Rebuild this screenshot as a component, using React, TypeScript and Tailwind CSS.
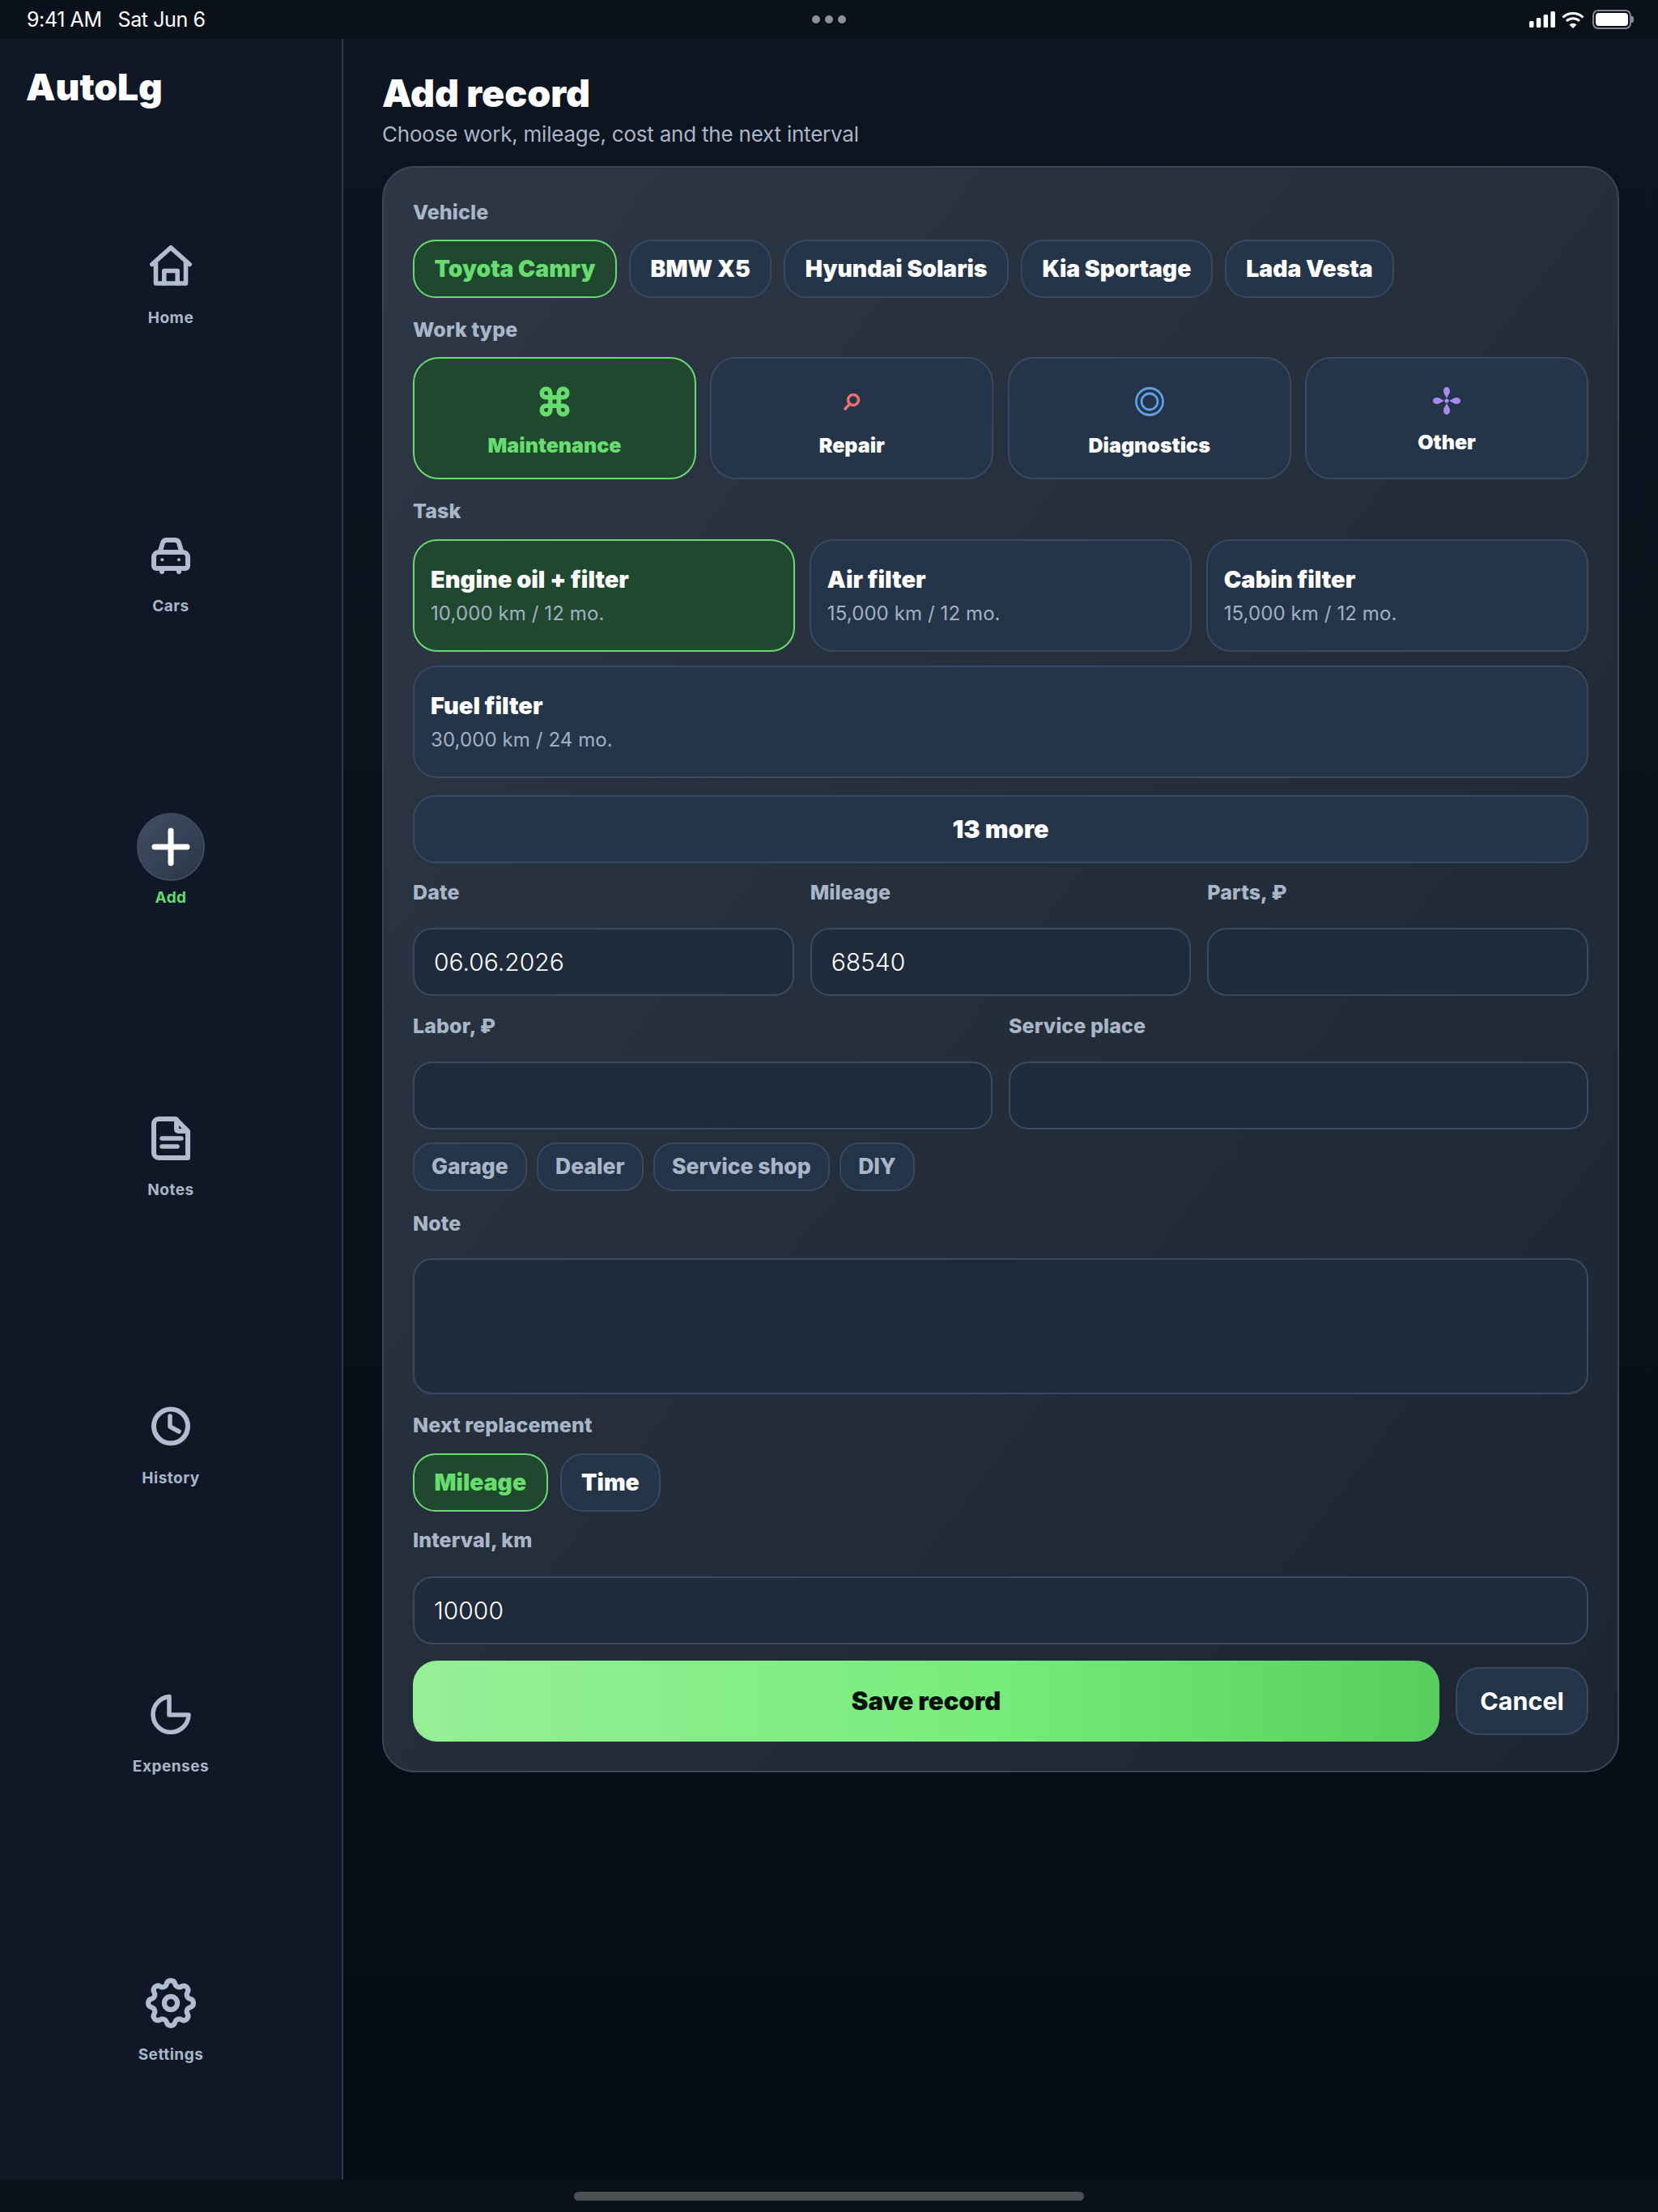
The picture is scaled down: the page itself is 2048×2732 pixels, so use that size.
import React from "react";

const Label = ({ children, className = "" }: { children: React.ReactNode; className?: string }) => (
  <div className={`h-[34px] text-[25px] leading-[32px] font-extrabold tracking-[0.1px] text-[#a9b6c8] ${className}`}>{children}</div>
);

const Chip = ({ children, active = false }: { children: React.ReactNode; active?: boolean }) => (
  <div
    className={`h-[72px] px-[24.500px] flex items-center rounded-[28px] border-2 text-[28.300px] font-black ${
      active ? "bg-[#20482f] border-[#6bd873] text-[#66dd6e]" : "bg-[#253549] border-[#3a4862] text-white"
    }`}
  >
    {children}
  </div>
);

const SmallChip = ({ children }: { children: React.ReactNode }) => (
  <div className="h-[60px] px-[21px] flex items-center rounded-[24px] border-2 bg-[#253549] border-[#3a4862] text-[#a9b6c8] text-[26.500px] font-extrabold">
    {children}
  </div>
);

const Field = ({ children, className = "" }: { children?: React.ReactNode; className?: string }) => (
  <div className={`h-[84px] px-[24px] flex items-center rounded-[24px] border-2 bg-[#1f2b3b] border-[#3b4a63] text-white text-[30px] font-[350] ${className}`}>
    {children}
  </div>
);

const TaskCard = ({ title, sub, active = false, className = "" }: { title: string; sub: string; active?: boolean; className?: string }) => (
  <div
    className={`h-[139px] pl-[20px] flex flex-col justify-center rounded-[30px] border-2 ${
      active ? "bg-[#20482f] border-[#6bd873]" : "bg-[#253549] border-[#3a4862]"
    } ${className}`}
  >
    <div className="text-[29px] leading-[40px] font-black text-white">{title}</div>
    <div className="mt-[4px] text-[24px] leading-[36px] tracking-[0.1px] text-[#a3b0c2]">{sub}</div>
  </div>
);

const WorkCard = ({ label, icon, active = false, boxClass, labelClass }: { label: string; icon: React.ReactNode; active?: boolean; boxClass: string; labelClass: string }) => (
  <div
    className={`h-[151px] flex flex-col items-center justify-center rounded-[32px] border-2 ${
      active ? "bg-[#20482f] border-[#6bd873]" : "bg-[#253549] border-[#3a4862]"
    }`}
  >
    <div className={`flex items-center justify-center ${boxClass}`}>{icon}</div>
    <div className={`text-[25px] leading-[32px] font-black ${active ? "text-[#66dd6e]" : "text-white"} ${labelClass}`}>{label}</div>
  </div>
);

const iconStroke = {
  fill: "none",
  stroke: "#b1bdcd",
  strokeLinecap: "round" as const,
  strokeLinejoin: "round" as const,
};

const HomeIcon = () => (
  <svg width="52" height="50" viewBox="0 0 52 50" {...iconStroke} strokeWidth="5.6">
    <path d="M2.8 23.5 26 2.8l23.2 20.700" />
    <path d="M7.500 20v27h37V20" />
    <path d="M17.800 47V31.500h16.400V47" />
  </svg>
);

const CarIcon = () => (
  <svg width="48" height="46" viewBox="0 0 48 46" {...iconStroke} strokeWidth="6">
    <path d="M9 19h30a6 6 0 0 1 6 6v11a3 3 0 0 1-3 3H6a3 3 0 0 1-3-3V25a6 6 0 0 1 6-6Z" />
    <path d="M10.500 19 14 7.500A5 5 0 0 1 18.500 4h11A5 5 0 0 1 34 7.500L37.500 19" />
    <path d="M13 40v3M34 40v3" />
    <circle cx="13.300" cy="28.300" r="2" fill="#b1bdcd" stroke="none" />
    <circle cx="34" cy="28.300" r="2" fill="#b1bdcd" stroke="none" />
  </svg>
);

const PlusIcon = () => (
  <svg width="48" height="48" viewBox="0 0 48 48" fill="none" stroke="#ffffff" strokeWidth="7" strokeLinecap="round">
    <path d="M24 4v40M4 24h40" />
  </svg>
);

const NoteIcon = () => (
  <svg width="48" height="54" viewBox="0 0 48 54" {...iconStroke} strokeWidth="6">
    <path d="M9 3h21l15 15v33H9a6 6 0 0 1-6-6V9a6 6 0 0 1 6-6Z" />
    <path d="M31 4v12a2 2 0 0 0 2 2h11" />
    <path d="M13 27h24M13 37h19" strokeWidth="5.500" />
  </svg>
);

const ClockIcon = () => (
  <svg width="48" height="49" viewBox="0 0 48 49" {...iconStroke} strokeWidth="6">
    <circle cx="24" cy="24.500" r="21" />
    <path d="M23 12v13l11 6" strokeWidth="5.500" />
  </svg>
);

const PieIcon = () => (
  <svg width="50" height="50" viewBox="0 0 50 50" {...iconStroke} strokeWidth="5.500">
    <path d="M23 3.500A22 22 0 1 0 47 26H23Z" />
  </svg>
);

const GearIcon = () => (
  <svg width="62" height="62" viewBox="2 2 20 20" {...iconStroke} strokeWidth="2">
    <path d="M10.325 4.317c.426-1.756 2.924-1.756 3.35 0a1.724 1.724 0 002.573 1.066c1.543-.94 3.31.826 2.37 2.37a1.724 1.724 0 001.065 2.572c1.756.426 1.756 2.924 0 3.35a1.724 1.724 0 00-1.066 2.573c.94 1.543-.826 3.31-2.37 2.37a1.724 1.724 0 00-2.572 1.065c-.426 1.756-2.924 1.756-3.35 0a1.724 1.724 0 00-2.573-1.066c-1.543.94-3.31-.826-2.37-2.37a1.724 1.724 0 00-1.065-2.572c-1.756-.426-1.756-2.924 0-3.35a1.724 1.724 0 001.066-2.573c-.94-1.543.826-3.31 2.37-2.37.996.608 2.296.07 2.572-1.065z" />
    <circle cx="12" cy="12" r="2.600" />
  </svg>
);

const NavItem = ({ icon, label, topClass, gapClass, active = false }: { icon: React.ReactNode; label: string; topClass: string; gapClass: string; active?: boolean }) => (
  <div className={`flex flex-col items-center ${topClass}`}>
    <div className={`flex justify-center ${gapClass}`}>{icon}</div>
    <div className={`h-[24px] text-[19px] leading-[26px] font-bold tracking-[0.5px] ${active ? "text-[#62d96b]" : "text-[#a9b6c8]"}`}>{label}</div>
  </div>
);

const Sidebar = () => (
  <aside className="w-[424px] shrink-0 bg-[#101827] border-r-2 border-[#2e3a50] flex flex-col">
    <div className="pt-[31px] pl-[32px] text-[46px] leading-[56px] font-black text-white">AutoLg</div>
    <NavItem icon={<HomeIcon />} label="Home" topClass="mt-[168px]" gapClass="mb-[27px]" />
    <NavItem icon={<CarIcon />} label="Cars" topClass="mt-[259px]" gapClass="mb-[27px]" />
    <NavItem
      icon={
        <div className="w-[84px] h-[84px] rounded-full border-2 border-[#3f4c60] bg-gradient-to-br from-[#414f64] to-[#2a3547] flex items-center justify-center">
          <PlusIcon />
        </div>
      }
      label="Add"
      topClass="mt-[244px]"
      gapClass="mb-[8px]"
      active
    />
    <NavItem icon={<NoteIcon />} label="Notes" topClass="mt-[259px]" gapClass="mb-[24px]" />
    <NavItem icon={<ClockIcon />} label="History" topClass="mt-[256px]" gapClass="mb-[27px]" />
    <NavItem icon={<PieIcon />} label="Expenses" topClass="mt-[255px]" gapClass="mb-[27px]" />
    <NavItem icon={<GearIcon />} label="Settings" topClass="mt-[250px]" gapClass="mb-[20px]" />
  </aside>
);

const StatusBar = () => (
  <div className="h-[48px] shrink-0 bg-[#0a111b] relative flex items-center justify-between pl-[33px] pr-[30px]">
    <div className="text-white text-[25px] leading-[48px] whitespace-pre tracking-[-0.4px]">9:41 AM{"   "}Sat Jun 6</div>
    <div className="absolute left-[1003px] top-[19px] flex gap-[6px]">
      <div className="w-[10px] h-[10px] rounded-full bg-[#8d9199]" />
      <div className="w-[10px] h-[10px] rounded-full bg-[#8d9199]" />
      <div className="w-[10px] h-[10px] rounded-full bg-[#8d9199]" />
    </div>
    <div className="flex items-center gap-[8px]">
      <svg width="32" height="20" viewBox="0 0 32 20" fill="#ffffff">
        <rect x="0" y="12" width="5.500" height="8" rx="1.500" />
        <rect x="8.800" y="8" width="5.500" height="12" rx="1.500" />
        <rect x="17.600" y="4" width="5.500" height="16" rx="1.500" />
        <rect x="26.400" y="0" width="5.500" height="20" rx="1.500" />
      </svg>
      <svg width="28" height="21" viewBox="0 0 28 21" fill="none" stroke="#ffffff" strokeWidth="3">
        <path d="M1.500 7.500a18 18 0 0 1 25 0" />
        <path d="M6 12a11.500 11.500 0 0 1 16 0" />
        <path d="M14 21l-4.500-4.500a6.400 6.400 0 0 1 9 0Z" fill="#ffffff" stroke="none" />
      </svg>
      <div className="flex items-center ml-[2px]">
        <div className="w-[48px] h-[24px] rounded-[7px] border-2 border-[#84888f] p-[2px]">
          <div className="w-full h-full rounded-[4px] bg-white" />
        </div>
        <div className="w-[3px] h-[8px] rounded-r-[2px] bg-[#84888f]" />
      </div>
    </div>
  </div>
);

const OtherIcon = () => (
  <svg width="34" height="34" viewBox="0 0 34 34" fill="#a78bf0">
    <path d="M17 0c2.600 0 4 2.600 4 5.200 0 2.800-2.500 5-4 8.800-1.500-3.800-4-6-4-8.800C13 2.600 14.400 0 17 0Z" />
    <path d="M17 34c2.600 0 4-2.600 4-5.200 0-2.800-2.500-5-4-8.800-1.500 3.800-4 6-4 8.800 0 2.600 1.400 5.200 4 5.200Z" />
    <path d="M0 17c0-2.600 2.600-4 5.200-4 2.800 0 5 2.500 8.800 4-3.800 1.500-6 4-8.800 4C2.600 21 0 19.600 0 17Z" />
    <path d="M34 17c0-2.600-2.600-4-5.200-4-2.800 0-5 2.500-8.800 4 3.800 1.500 6 4 8.800 4 2.600 0 5.200-1.400 5.200-4Z" />
    <circle cx="17" cy="17" r="2.600" />
  </svg>
);

export default function App() {
  return (
    <div className="w-[2048px] h-[2732px] flex flex-col [font-family:Inter,sans-serif] bg-[#060c15] overflow-hidden">
      <StatusBar />
      <div className="flex-1 flex min-h-0">
        <Sidebar />
        <main className="flex-1 px-[48px] pt-[39px] bg-gradient-to-b from-[#0d1520] to-[#060c15]">
          <h1 className="text-[46.500px] leading-[56px] font-black text-white">Add record</h1>
          <p className="mt-[5px] text-[26px] leading-[36px] tracking-[-0.22px] text-[#a9b6c8]">Choose work, mileage, cost and the next interval</p>
          <section className="mt-[21px] w-[1528px] rounded-[40px] border-2 border-[#3a4559] bg-gradient-to-br from-[#2d3745] to-[#1c2632] p-[36px]">
            <Label className="mt-[3px]">Vehicle</Label>
            <div className="mt-[16px] flex gap-[15px]">
              <Chip active>Toyota Camry</Chip>
              <Chip>BMW X5</Chip>
              <Chip>Hyundai Solaris</Chip>
              <Chip>Kia Sportage</Chip>
              <Chip>Lada Vesta</Chip>
            </div>

            <Label className="mt-[23px]">Work type</Label>
            <div className="mt-[16px] grid grid-cols-4 gap-[17.500px]">
              <WorkCard
                active
                label="Maintenance"
                boxClass="h-[56px]"
                labelClass="mt-[10px]"
                icon={
                  <svg width="42" height="42" viewBox="0 0 24 24" fill="none" stroke="#66dd6e" strokeWidth="3.200" strokeLinecap="round" strokeLinejoin="round">
                    <path d="M15 6v12a3 3 0 1 0 3-3H6a3 3 0 1 0 3 3V6a3 3 0 1 0-3 3h12a3 3 0 1 0-3-3" />
                  </svg>
                }
              />
              <WorkCard
                label="Repair"
                boxClass="h-[56px]"
                labelClass="mt-[10px]"
                icon={
                  <svg width="22" height="22" viewBox="0 0 22 22" fill="none" stroke="#e8716f" strokeWidth="3.500" strokeLinecap="round">
                    <circle cx="13" cy="9" r="6.500" />
                    <path d="M8.500 14 3 20" />
                  </svg>
                }
              />
              <WorkCard
                label="Diagnostics"
                boxClass="h-[56px]"
                labelClass="mt-[10px]"
                icon={
                  <svg width="36" height="36" viewBox="0 0 36 36" fill="none" stroke="#5f9fe8" strokeWidth="2.800">
                    <circle cx="18" cy="18" r="16.500" />
                    <circle cx="18" cy="18" r="10" />
                  </svg>
                }
              />
              <WorkCard label="Other" boxClass="h-[46px]" labelClass="mt-[12px]" icon={<OtherIcon />} />
            </div>

            <Label className="mt-[23px]">Task</Label>
            <div className="mt-[17px] grid grid-cols-3 gap-x-[17.500px] gap-y-[17px]">
              <TaskCard active title="Engine oil + filter" sub="10,000 km / 12 mo." />
              <TaskCard title="Air filter" sub="15,000 km / 12 mo." />
              <TaskCard title="Cabin filter" sub="15,000 km / 12 mo." />
              <TaskCard title="Fuel filter" sub="30,000 km / 24 mo." className="col-span-3" />
            </div>
            <div className="mt-[21px] h-[84px] flex items-center justify-center rounded-[28px] border-2 bg-[#253549] border-[#3a4862] text-white text-[30.500px] font-black">
              13 more
            </div>

            <div className="mt-[20px] grid grid-cols-3 gap-x-[20px]">
              <div>
                <Label>Date</Label>
                <Field className="mt-[26px]">06.06.2026</Field>
              </div>
              <div>
                <Label>Mileage</Label>
                <Field className="mt-[26px]">68540</Field>
              </div>
              <div>
                <Label>Parts, ₽</Label>
                <Field className="mt-[26px]" />
              </div>
            </div>

            <div className="mt-[21px] grid grid-cols-2 gap-x-[20px]">
              <div>
                <Label>Labor, ₽</Label>
                <Field className="mt-[26px]" />
              </div>
              <div>
                <Label>Service place</Label>
                <Field className="mt-[26px]" />
              </div>
            </div>

            <div className="mt-[16px] flex gap-[12.500px]">
              <SmallChip>Garage</SmallChip>
              <SmallChip>Dealer</SmallChip>
              <SmallChip>Service shop</SmallChip>
              <SmallChip>DIY</SmallChip>
            </div>

            <Label className="mt-[24px]">Note</Label>
            <div className="mt-[25px] h-[168px] rounded-[24px] border-2 bg-[#1f2b3b] border-[#3b4a63]" />

            <Label className="mt-[22px]">Next replacement</Label>
            <div className="mt-[17px] flex gap-[15px]">
              <Chip active>Mileage</Chip>
              <Chip>Time</Chip>
            </div>

            <Label className="mt-[19px]">Interval, km</Label>
            <Field className="mt-[27px]">10000</Field>

            <div className="mt-[20px] flex items-center gap-[20px]">
              <div className="flex-1 h-[100px] flex items-center justify-center rounded-[30px] bg-gradient-to-r from-[#96ef96] via-[#78ec7c] via-55% to-[#58ce5f] text-[#06100a] text-[31px] font-black">
                Save record
              </div>
              <div className="w-[164px] h-[84px] flex items-center justify-center rounded-[30px] border-2 bg-[#253549] border-[#3a4862] text-white text-[30.500px] font-bold">
                Cancel
              </div>
            </div>
          </section>
        </main>
      </div>
      <div className="h-[40px] shrink-0 bg-[#0a111b] flex items-center justify-center">
        <div className="w-[630px] h-[11px] rounded-full bg-[#4d4f52]" />
      </div>
    </div>
  );
}
